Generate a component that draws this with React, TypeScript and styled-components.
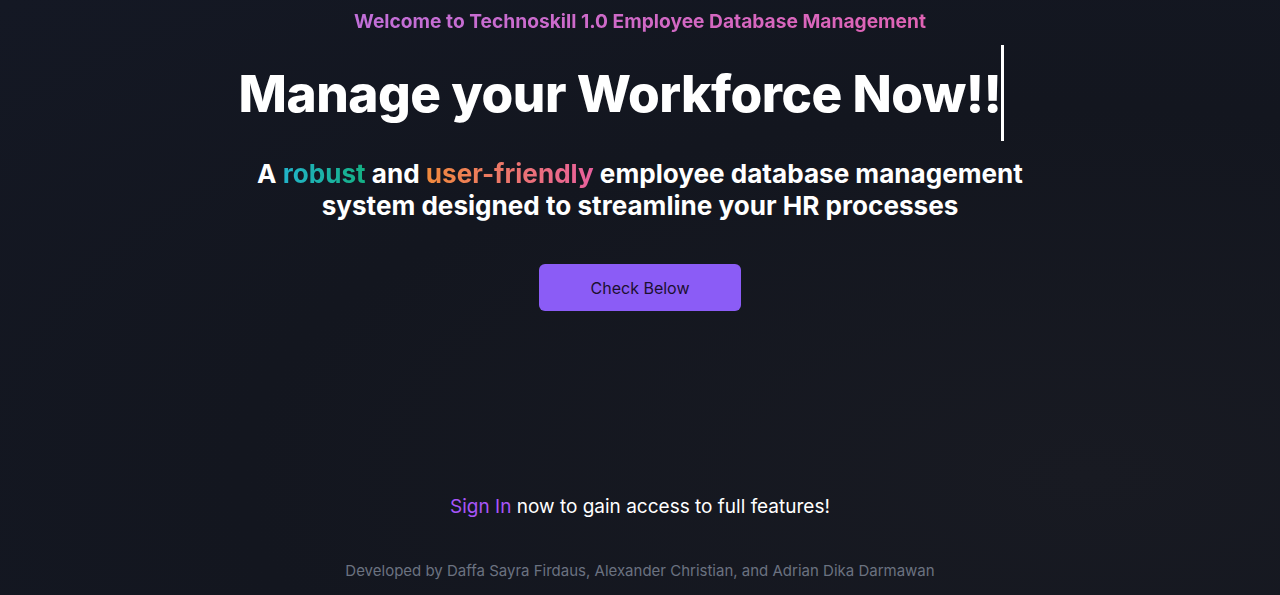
import React from 'react';
import styled, { createGlobalStyle } from 'styled-components';

const GlobalStyle = createGlobalStyle`
  html, body {
    margin: 0;
    padding: 0;
    background: #13161f;
  }
  body {
    font-family: Inter, "Noto Sans", sans-serif;
  }
`;

const Page = styled.main`
  min-height: 595px;
  box-sizing: border-box;
  display: flex;
  flex-direction: column;
  align-items: center;
  background: radial-gradient(ellipse at 85% 80%, #181a22 0%, #13161f 55%, #141824 100%);
  color: #fff;
  text-align: center;
`;

const Welcome = styled.p`
  margin: 9px 0 0;
  font-size: 19.2px;
  font-weight: 700;
  line-height: 24px;
  background: linear-gradient(90deg, #c16fd9, #e063b4);
  -webkit-background-clip: text;
  background-clip: text;
  color: transparent;
`;

const TitleRow = styled.div`
  display: flex;
  align-items: center;
  margin: 12px 37px 0 0;
`;

const Title = styled.h1`
  margin: 0;
  font-size: 51.3px;
  font-weight: 800;
  line-height: 96px;
  letter-spacing: -0.5px;
`;

const Caret = styled.span`
  width: 3px;
  height: 96px;
  background: #fff;
`;

const Lead = styled.p`
  margin: 17px 0 0;
  width: 820px;
  font-size: 26.1px;
  font-weight: 700;
  line-height: 32px;
`;

const Accent = styled.span<{ from: string; to: string }>`
  display: inline-block;
  background: linear-gradient(90deg, ${(p) => p.from}, ${(p) => p.to});
  -webkit-background-clip: text;
  background-clip: text;
  color: transparent;
`;

const CheckButton = styled.button`
  margin-top: 42px;
  width: 202px;
  height: 47px;
  border: none;
  border-radius: 6px;
  background: #8b5cf6;
  color: #1b1030;
  font-family: inherit;
  font-size: 16px;
  cursor: pointer;
`;

const SignInLine = styled.p`
  margin: 184px 0 0;
  font-size: 19px;
  line-height: 24px;
`;

const SignIn = styled.a`
  color: #a855f7;
  text-decoration: none;
  cursor: pointer;
`;

const Footer = styled.footer`
  margin-top: 43px;
  font-size: 15px;
  line-height: 18px;
  color: #6b7280;
`;

export default function App() {
  return (
    <>
      <GlobalStyle />
      <Page>
        <Welcome>Welcome to Technoskill 1.0 Employee Database Management</Welcome>
        <TitleRow>
          <Title>Manage your Workforce Now!!</Title>
          <Caret />
        </TitleRow>
        <Lead>
          A <Accent from="#22b3c9" to="#14b083">robust</Accent> and{' '}
          <Accent from="#f08a3c" to="#e8609e">user-friendly</Accent> employee database
          management system designed to streamline your HR processes
        </Lead>
        <CheckButton>Check Below</CheckButton>
        <SignInLine>
          <SignIn>Sign In</SignIn> now to gain access to full features!
        </SignInLine>
        <Footer>Developed by Daffa Sayra Firdaus, Alexander Christian, and Adrian Dika Darmawan</Footer>
      </Page>
    </>
  );
}
